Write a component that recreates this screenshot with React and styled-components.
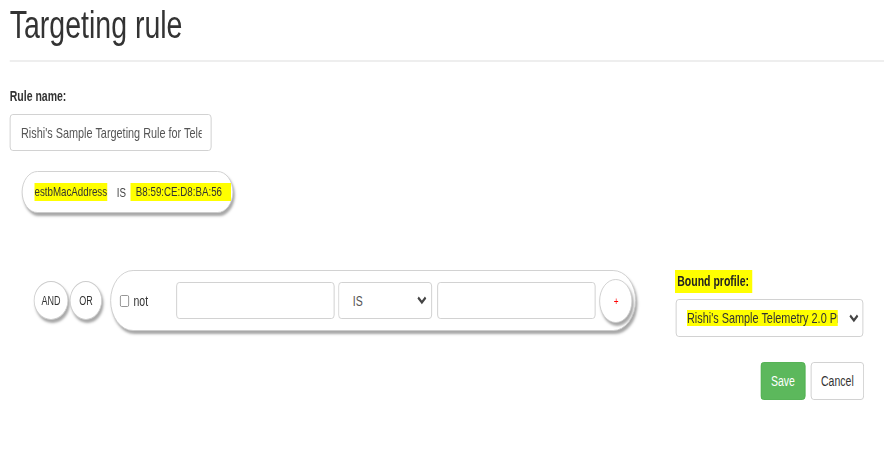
import styled, { createGlobalStyle } from "styled-components";

const GlobalStyle = createGlobalStyle`
  body {
    margin: 0;
    background: #fff;
    overflow: hidden;
    font-family: "Liberation Sans", Arial, sans-serif;
    color: #333;
  }
`;

// the captured page is squeezed horizontally, so the layout is drawn wide and scaled
const Page = styled.div`
  width: 1179px;
  box-sizing: border-box;
  padding: 0 27px 0 13px;
  transform: scaleX(0.75);
  transform-origin: 0 0;
`;

const Title = styled.h1`
  margin: 0;
  font-size: 38px;
  line-height: 50px;
  font-weight: 400;
  color: #333;
`;

const Divider = styled.div`
  margin-top: 10px;
  margin-right: -27px;
  height: 2px;
  background: #eee;
`;

const Label = styled.label`
  display: block;
  margin: 25px 0 9px;
  font-size: 14px;
  line-height: 18px;
  font-weight: 700;
`;

const TextInput = styled.input`
  display: block;
  box-sizing: border-box;
  width: ${(p) => p.$width || 211}px;
  height: 37px;
  margin: 0;
  padding: 0 12px 0 14px;
  border: 1px solid #ccc;
  border-radius: 4px;
  background: #fff;
  font-family: inherit;
  font-size: 14.5px;
  color: #555;
  outline: none;
  flex: none;
`;

const Pill = styled.div`
  display: inline-flex;
  align-items: center;
  box-sizing: border-box;
  height: ${(p) => p.$height}px;
  border: 1px solid #ccc;
  border-radius: ${(p) => p.$height / 2}px;
  box-shadow: 2px 3px 3px rgba(0, 0, 0, 0.35);
  background: #fff;
`;

const ConditionPill = styled(Pill)`
  margin: 20px 0 0 16px;
  padding: 0 2px 0 16px;
  font-size: 13px;
`;

const Mark = styled.span`
  background: #ffff00;
  line-height: ${(p) => p.$lh || 18}px;
  padding: ${(p) => p.$pad || "0"};
  white-space: nowrap;
`;

const Operator = styled.span`
  margin: 0 6px 0 13px;
  color: #444;
`;

const BuilderRow = styled.div`
  display: flex;
  justify-content: space-between;
  align-items: flex-start;
  margin-top: 57px;
`;

const Group = styled.div`
  display: flex;
  align-items: center;
  margin-left: 32px;
`;

const Round = styled.button`
  box-sizing: border-box;
  width: ${(p) => p.$w}px;
  height: ${(p) => p.$h}px;
  margin: 0 ${(p) => p.$mr || 0}px 0 ${(p) => p.$ml || 0}px;
  padding: 0;
  border: 1px solid #ccc;
  border-radius: 50%;
  background: #fff;
  box-shadow: 2px 3px 3px rgba(0, 0, 0, 0.35);
  font-family: inherit;
  font-size: ${(p) => p.$fs || 12}px;
  color: ${(p) => p.$color || "#333"};
  flex: none;
`;

const RulePill = styled(Pill)`
  width: 701px;
  padding: 0 3px 0 12px;
`;

const CheckBox = styled.span`
  box-sizing: border-box;
  width: 12px;
  height: 12px;
  border: 1px solid #888;
  border-radius: 2px;
  margin-right: 6px;
`;

const NotText = styled.span`
  font-size: 14px;
  margin-right: 38px;
`;

const SelectBox = styled.div`
  display: flex;
  align-items: center;
  box-sizing: border-box;
  width: ${(p) => p.$width}px;
  height: ${(p) => p.$height || 37}px;
  margin: ${(p) => p.$margin || "0"};
  padding: ${(p) => p.$pad || "0 6px 0 18px"};
  border: 1px solid #ccc;
  border-radius: 4px;
  background: #fff;
  font-size: 14px;
  color: #555;
  flex: none;
`;

const Clip = styled.span`
  width: ${(p) => p.$width}px;
  overflow: hidden;
  color: #333;
  font-size: 14.5px;
`;

const Chevron = styled.svg`
  margin-left: auto;
  width: 13px;
  height: 9px;
`;

const Side = styled.div`
  width: 252px;
`;

const SideLabel = styled.span`
  display: inline-block;
  height: 23px;
  line-height: 23px;
  padding: 0 4px 0 3px;
  background: #ffff00;
  font-size: 14px;
  font-weight: 700;
  color: #222;
`;

const Actions = styled.div`
  display: flex;
  justify-content: flex-end;
  gap: 7px;
  margin-top: 25px;
`;

const Button = styled.button`
  box-sizing: border-box;
  height: 38px;
  width: ${(p) => p.$width}px;
  padding: 0;
  border: 1px solid ${(p) => (p.$primary ? "#4cae4c" : "#ccc")};
  border-radius: 4px;
  background: ${(p) => (p.$primary ? "#5cb85c" : "#fff")};
  color: ${(p) => (p.$primary ? "#fff" : "#333")};
  font-family: inherit;
  font-size: 14px;
`;

const Arrow = () => (
  <Chevron viewBox="0 0 13 9">
    <path d="M1.5 1.5 L6.5 6.5 L11.5 1.5" fill="none" stroke="#444" strokeWidth="2.6" />
  </Chevron>
);

const App = () => {
  return (
    <Page>
      <GlobalStyle />
      <Title>Targeting rule</Title>
      <Divider />
      <Label>Rule name:</Label>
      <TextInput $width={269} defaultValue="Rishi's Sample Targeting Rule for Telemetry 2.0" />
      <ConditionPill $height={42}>
        <Mark>estbMacAddress</Mark>
        <Operator>IS</Operator>
        <Mark $pad="0 12px 0 7px">B8:59:CE:D8:BA:56</Mark>
      </ConditionPill>
      <BuilderRow>
        <Group>
          <Round $w={46} $h={39} $mr={2}>AND</Round>
          <Round $w={43} $h={39} $mr={11}>OR</Round>
          <RulePill $height={61}>
            <CheckBox />
            <NotText>not</NotText>
            <TextInput />
            <SelectBox $width={125} $margin="0 7px 0 5px">
              IS
              <Arrow />
            </SelectBox>
            <TextInput />
            <Round $w={44} $h={44} $fs={11} $color="#f00" $ml={5}>+</Round>
          </RulePill>
        </Group>
        <Side>
          <SideLabel>Bound profile:</SideLabel>
          <SelectBox $width={250} $height={38} $margin="6px 0 0 1px" $pad="0 5px 0 14px">
            <Clip $width={201}>
              <Mark $lh={24}>Rishi's Sample Telemetry 2.0 Profile</Mark>
            </Clip>
            <Arrow />
          </SelectBox>
          <Actions>
            <Button $primary $width={60}>Save</Button>
            <Button $width={71}>Cancel</Button>
          </Actions>
        </Side>
      </BuilderRow>
    </Page>
  );
};

export default App;
